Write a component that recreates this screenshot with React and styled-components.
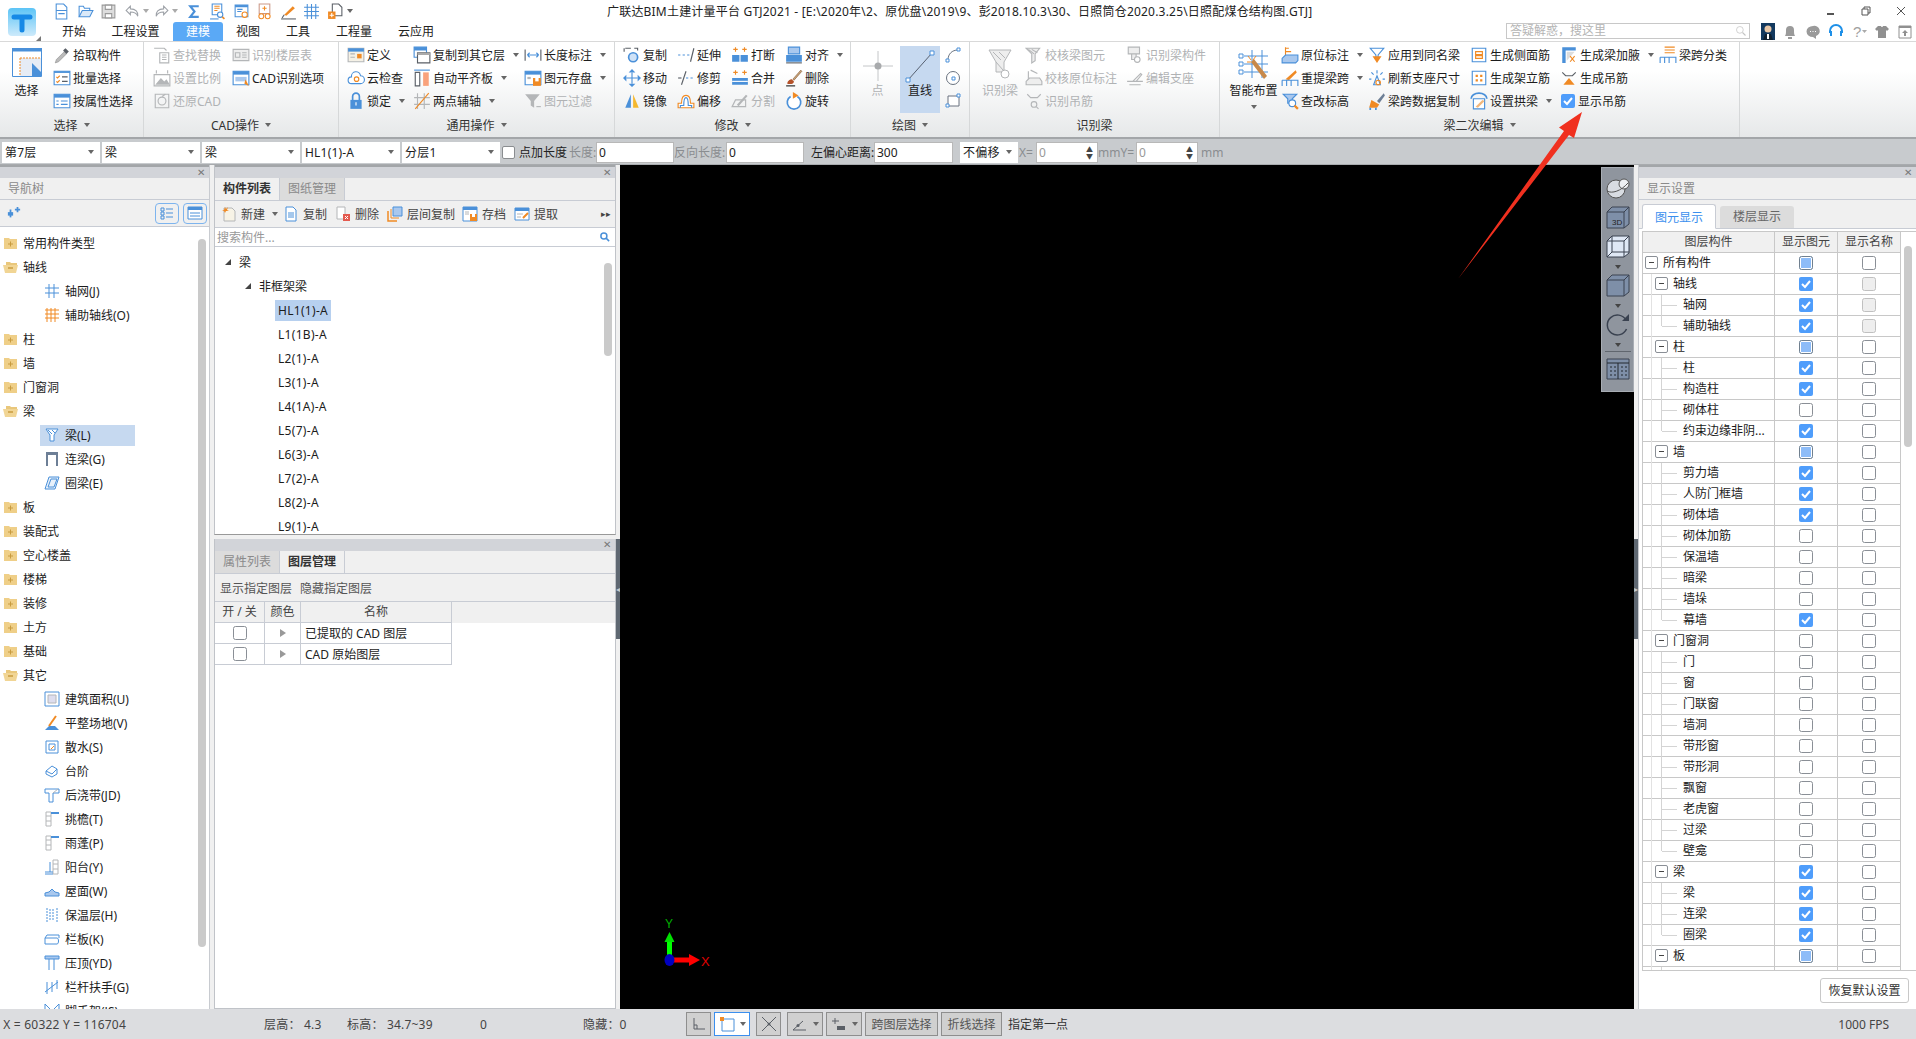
import React from 'react';
import styled, { createGlobalStyle } from 'styled-components';

const GlobalStyle = createGlobalStyle`
  html, body { margin: 0; padding: 0; background: #f0f0f0; }
  body { font-family: "Noto Sans", "Noto Sans CJK SC", sans-serif; font-size: 12px; color: #1c1c1c; }
  * { box-sizing: border-box; }
`;

const B = '#4a90d9', O = '#f08a24', G = '#b4b6b8', D = '#5a5f66', L = '#a9c8ee';

const icons = {
  // quick access
  newDoc: <><path d="M3 1h7l3 3v11H3z" fill="#fff" stroke={B} /><path d="M3 7h10M5 10h6" stroke={B} /></>,
  open: <><path d="M2 13V3h4l1 2h5v2" fill="none" stroke={B} /><path d="M2 13l3-6h10l-3 6z" fill="#dbe9f8" stroke={B} /></>,
  floppy: <><path d="M2 2h12v12H2z" fill="#ddd" stroke="#9a9a9a" /><path d="M5 2h6v4H5zM5 10h6v4H5z" fill="#fff" stroke="#9a9a9a" /></>,
  undo: <path d="M6 3L2 7l4 4V8.500c4 0 6 1 7 4 .5-4-2-7-7-7z" fill="#fff" stroke="#9ea2a8" />,
  redo: <path d="M10 3l4 4-4 4V8.500c-4 0-6 1-7 4-.5-4 2-7 7-7z" fill="#fff" stroke="#9ea2a8" />,
  sigma: <path d="M12 3H4l4 5-4 5h8" fill="none" stroke={B} strokeWidth="2" />,
  report: <><path d="M3 1h9v10H3z" fill="#fff" stroke={B} /><path d="M5 3h5M5 5h5M5 7h3" stroke={O} /><path d="M1 15h8" stroke={B} /><circle cx="10.500" cy="11" r="2.500" fill="#fff" stroke={B} /><path d="M12.500 13l2 2" stroke={O} strokeWidth="1.500" /></>,
  reportB: <><path d="M2 2h12v11H2z" fill="#fff" stroke={B} /><path d="M2 2h12v2H2z" fill={B} /><path d="M4 6h5M4 8h4" stroke={B} /><circle cx="11" cy="11" r="2.500" fill="#fff" stroke={O} /></>,
  glasses: <><path d="M3 1h10v9H3z" fill="#fff" stroke="#c98" /><path d="M6 5h4M8 3v4" stroke={O} /><circle cx="5" cy="12.500" r="2.300" fill="#fff" stroke={O} /><circle cx="11" cy="12.500" r="2.300" fill="#fff" stroke={O} /></>,
  pen: <><path d="M4 11l8-8 2 2-8 7z" fill={O} /><path d="M1 15h14" stroke={D} /><path d="M2 14l2-3" stroke={D} /></>,
  mesh: <path d="M1 4h14M1 8h14M1 12h14M4 1v14M8 1v14M12 1v14" fill="none" stroke={B} />,
  addDoc: <><path d="M5 1h6l3 3v8H5z" fill="#fff" stroke={D} /><path d="M1 8h7v7H1z" fill={O} /><path d="M4.500 9.500v4M2.500 11.500h4" stroke="#fff" /></>,
  // select group
  pick: <><path d="M2 15l1-3 7-7 2 2-7 7z" fill="#bbb" stroke="#888" strokeWidth=".5" /><path d="M10 3l3 3" stroke={D} strokeWidth="3" /></>,
  batch: <><path d="M1 2h14v12H1z" fill="#fff" stroke={B} /><path d="M1 2h14v1.500H1z" fill={B} /><path d="M3 7l1 1 2-2M3 11l1 1 2-2" fill="none" stroke={O} /><path d="M8 7h5M8 11h5" stroke={D} /></>,
  attr: <><path d="M1 2h14v12H1z" fill="#fff" stroke={B} /><path d="M1 2h14v3H1z" fill={B} /><path d="M3 8h2M3 11h2M7 8h6M7 11h6" stroke={B} /></>,
  // CAD
  findOff: <><path d="M6 6h8v9H6z" fill="none" stroke={G} /><path d="M8 8h4M8 10h4M8 12h4" stroke={G} /><path d="M1 2h9l2 2" fill="none" stroke={G} /></>,
  tableOff: <><path d="M1 3h14v10H1z" fill="#eee" stroke={G} /><path d="M3 6h4v4H3zM9 6h4M9 8h4M9 10h4" fill="none" stroke={G} /></>,
  scaleOff: <><path d="M1 5h14v10H1z" fill="#fff" stroke={G} /><path d="M2 14l5-6 3 3 2-2 3 5z" fill={G} /><path d="M3 1v3M13 1v3" stroke={G} /></>,
  restoreOff: <><path d="M2 2h12v12H2z" fill="none" stroke={G} /><circle cx="8" cy="8" r="3.500" fill="none" stroke={G} /><path d="M8 4l3-2" stroke={G} /></>,
  cadOpt: <><path d="M1 2h14v12H1z" fill="#fff" stroke={B} /><path d="M1 2h14v3H1z" fill={B} /><path d="M3 7h10v4H3z" fill={L} /><path d="M12 9l3 6-4-2z" fill={O} /></>,
  // common
  define: <><path d="M1 2h14v12H1z" fill="#f5f1e6" stroke={G} /><path d="M1 2h14v3H1z" fill={B} /><path d="M3 7h4M3 10h4" stroke={G} /><path d="M9 7h4v4H9z" fill={O} /></>,
  cloud: <><path d="M4 13a3 3 0 010-6 4 4 0 018-1 3.500 3.500 0 010 7z" fill="#fff" stroke={B} /><circle cx="8.500" cy="9" r="2" fill="none" stroke={O} /></>,
  lock: <><path d="M5 7V4a3 3 0 016 0v3" fill="none" stroke={B} strokeWidth="1.500" /><path d="M3 7h10v8H3z" fill={B} /><path d="M8 9v3" stroke="#fff" /></>,
  copyFloor: <><path d="M1 1h11v9H1z" fill="#fff" stroke={B} /><path d="M1 1h11v3H1z" fill={B} /><path d="M4 6h11v9H4z" fill="#fff" stroke={D} /><path d="M4 6h11v2H4z" fill="#aaa" /></>,
  level: <><path d="M1 1h14" stroke={B} /><path d="M2 3h4v12H2z" fill="#fff" stroke={D} /><path d="M9 3h5v12H9z" fill="#f9a27c" /></>,
  twoPt: <><path d="M4 1v14M1 5h14M10 1v14M1 11h14" stroke={G} /><path d="M2 15L14 1" stroke={O} /></>,
  dim: <><path d="M1 3v10M15 3v10" stroke={D} /><path d="M3 8h10M3 8l2-2M3 8l2 2M13 8l-2-2M13 8l-2 2" fill="none" stroke={B} /></>,
  saveEl: <><path d="M1 2h14v12H1z" fill="#fff" stroke={B} /><path d="M1 2h14v3H1z" fill={B} /><path d="M3 7h3v2H3z" fill={G} /><path d="M8 8h7v7H8z" fill={O} /><path d="M10 8h3v3h-3z" fill="#fff" /></>,
  filterOff: <><path d="M1 2h13L9 8v6l-3-2V8z" fill={G} /><path d="M11 13h4" stroke={G} /></>,
  // edit
  copy: <><path d="M2 2h5M1 2v3M10 2h3v2" fill="none" stroke={D} /><circle cx="9" cy="10" r="4" fill="#cfe2f7" stroke={B} strokeWidth="1.500" /></>,
  move: <><path d="M8 3v10M3 8h10" stroke={B} /><path d="M8 0l3 3H5zM8 16l3-3H5zM0 8l3-3v6zM16 8l-3-3v6z" fill={B} /></>,
  mirror: <><path d="M7 2v12H2z" fill={B} /><path d="M9 2v12h5z" fill="#f5b82e" /></>,
  extend: <><path d="M1 8h2M5 8h2M9 8h2" stroke={B} /><path d="M15 2l-3 12" fill="none" stroke={D} /></>,
  trim: <><path d="M4 14L8 2" stroke={D} /><path d="M1 8h3" stroke={D} /><path d="M8 8h2M12 8h2" stroke={B} /></>,
  offset: <><path d="M1 14v-4h3c0-5 2-7 4-7s4 2 4 7h3v4z" fill="#fff" stroke={O} /><path d="M3 14v-2h3c0-5 1-7 2-7s2 2 2 7h3v2" fill="none" stroke={B} /></>,
  breakEl: <><path d="M2 3h4M4 1v4M10 3h4M12 1v4" stroke={O} /><path d="M1 8h6.500v6H1zM8.500 8H15v6H8.500z" fill={B} /></>,
  merge: <><path d="M2 3h4M4 1v4M10 3h4M12 1v4" stroke={O} /><path d="M1 8h14v6H1z" fill={B} /><path d="M1 11h14" stroke="#fff" /></>,
  splitOff: <><path d="M1 13l3-6h9v6z" fill="none" stroke={G} /><path d="M6 12l8-9" stroke={G} strokeWidth="2" /></>,
  alignEl: <><path d="M3 1h10v6H3z" fill={L} stroke={B} /><path d="M1 8h14v6H1z" fill={B} /><path d="M1 15h14" stroke={D} /></>,
  erase: <><path d="M2 13c0-2 2-4 4-4l2 2c0 2-3 3-6 2z" fill="#b5522a" /><path d="M7 9l7-8 1 1-7 8z" fill="#c9a57a" stroke="#7a4a20" strokeWidth=".5" /><path d="M1 15h8" stroke="#222" /></>,
  rotate: <><path d="M5 4a6 6 0 106 0" fill="#fff" stroke={B} strokeWidth="1.500" /><path d="M7 0v6l5-3z" fill={O} /></>,
  // draw
  arc: <><path d="M3 13C3 7 7 3 13 3" fill="none" stroke="#6a7380" /><path d="M1 12h3v3H1zM12 1h3v3h-3z" fill="#fff" stroke={B} /></>,
  circle: <><circle cx="8" cy="8" r="6.500" fill="#fff" stroke="#6a7380" /><path d="M7 7h3v3H7z" fill="#fff" stroke={B} /></>,
  rectDraw: <><path d="M3 3h11v10H3z" fill="#fff" stroke="#6a7380" /><path d="M1 11h3v3H1zM12 1h3v3h-3z" fill="#fff" stroke={B} /></>,
  // identify
  checkOff: <><path d="M1 2h12L9 7v6l-3 2V7z" fill="#eee" stroke={G} /><path d="M3 3l5 4M6 3l5 3" stroke={G} /></>,
  noteOff: <><path d="M3 2v9" stroke={G} /><path d="M1 11l3-3h9l2 3v3H1z" fill="#eee" stroke={G} /><path d="M5 1l6 3" stroke={G} /></>,
  hangOff: <><path d="M2 2l3 3h6l3-3" fill="none" stroke={G} /><circle cx="8" cy="11" r="2.500" fill="none" stroke={G} /><path d="M10 13l2 2" stroke={G} /></>,
  idOff: <><path d="M2 1h10v6H2zM5 7h4v5H5z" fill="#eee" stroke={G} /><circle cx="10" cy="12" r="2.500" fill="#fff" stroke={G} /></>,
  supOff: <><path d="M1 11h14M3 14h10M6 11l7-7 1 1-5 6" fill="none" stroke={G} /></>,
  // beam
  origin: <><path d="M4 1v8M4 2h3M4 5h5" stroke={O} /><path d="M1 11l3-3h11v5l-2 2H1z" fill={L} stroke={B} /></>,
  reget: <><path d="M4 9l9-8 1 2-7 7z" fill={O} /><path d="M1 10h14v5M1 10v5M5 10v5M9 10v5" fill="none" stroke={B} /></>,
  apply: <><path d="M2 2h12L9 8v2H7V8z" fill="#fff" stroke={B} /><path d="M4 9h8l-4 6z" fill={O} /></>,
  refresh: <><path d="M8 1v3M3 3l2 2M13 3l-2 2M1 9h2M13 9h2" stroke={B} /><path d="M5 14l3-8 3 8z" fill="#fff" stroke={B} /><circle cx="9" cy="12" r="2" fill="none" stroke={O} /></>,
  copyData: <><path d="M8 8l6-7 1 2-5 7z" fill="#6d7f96" /><path d="M3 7l7 4-2 3H1z" fill={O} /><path d="M2 14v2M7 14v2" stroke={B} strokeWidth="1.500" /></>,
  sideBar: <><path d="M2 2h12v12H2z" fill="#fff" stroke={B} /><path d="M5 5h6v2.500H5zM5 8.500h6V11H5z" fill="none" stroke={O} /></>,
  stand: <><path d="M2 2h12v12H2z" fill="#fff" stroke={B} /><path d="M5 5h2v2H5zM9 5h2v2H9zM5 9h2v2H5zM9 9h2v2H9z" fill={O} /></>,
  arch: <><path d="M1 6a7 5 0 0114 0" fill="none" stroke={B} strokeWidth="1.500" /><path d="M3 6h10v9H3z" fill="#fff" stroke={B} /><path d="M5 13l6-6 2 1-6 6z" fill="#f3b77b" /></>,
  haunch: <><path d="M2 1h12v3H2zM2 4h3v11H2z" fill={B} /><path d="M6 5h7l-7 8z" fill="#ddd" /><path d="M9 9l4 5M13 9l-4 5" stroke={O} /></>,
  genHang: <><path d="M2 3l3 3h6l3-3" fill="none" stroke={D} /><path d="M8 8l5 6H3z" fill={O} /></>,
  classify: <><path d="M5 1h9M5 3.500h9M5 6h9" stroke={O} /><path d="M1 10h14v5M1 10v5M5 10v5M9 10v5" fill="none" stroke={B} /></>,
  modify: <><path d="M2 2h12l-4 4v4H6V6z" fill={L} stroke={B} /><circle cx="10" cy="10" r="3" fill="#fff" stroke={B} /><path d="M12 12l3 3" stroke={O} strokeWidth="2" /></>,
  checked: <><rect x="1" y="1" width="14" height="14" rx="2" fill="#4f9dfb" /><path d="M4 8l3 3 5-6" fill="none" stroke="#fff" strokeWidth="2" /></>,
  // nav tree
  axisNet: <path d="M1 5h14M1 10h14M5 1v14M10 1v14" fill="none" stroke={B} />,
  axisAux: <path d="M1 3h14M1 7h14M1 11h14M3 1v14M7 1v14M11 1v14" fill="none" stroke={O} />,
  beam: <><path d="M2 2h12L10 8v6H6V8z" fill="#fff" stroke={B} /><path d="M4 3l4 4M8 3l3 3" stroke={B} /></>,
  link: <><path d="M2 1h12v3H2z" fill="#6d7f96" /><path d="M3 4v11M13 4v11" stroke="#6d7f96" strokeWidth="2" /></>,
  ring: <path d="M5 2h10l-4 12H1zM7 4h6l-3 8H4z" fill="#e8f1fb" stroke={B} />,
  area: <><path d="M1 1h14v14H1z" fill="#fff" stroke={B} /><path d="M4 4h8v8H4z" fill="#dde" stroke={G} /></>,
  land: <><path d="M1 15l4-4h6l4 4z" fill={B} /><path d="M5 11l7-10" stroke={O} strokeWidth="2" /></>,
  apron: <><path d="M2 2h12v12H2z" fill="#fff" stroke={B} /><path d="M5 5h6v6H5z" fill="none" stroke={B} /><path d="M7 10l3-3" stroke={O} /></>,
  step: <><path d="M2 8l6-5 5 3v5l-5 3-6-3z" fill="#fff" stroke={B} /><path d="M2 8l6 3 5-5" fill="none" stroke={B} /></>,
  post: <><path d="M1 2h14v4H9v9H5V6H1z" fill="#fff" stroke={B} /><path d="M9 6l5-4" stroke={G} /></>,
  eave: <><path d="M2 1h5v14H2zM2 5h5M2 10h5" fill="none" stroke={G} /><path d="M7 2h8" stroke={B} strokeWidth="2" /></>,
  balcony: <><path d="M9 1h5v14H9zM9 5h5M9 10h5" fill="none" stroke={G} /><path d="M1 13h8M1 15h8M6 3v10" stroke={B} /></>,
  roof: <path d="M1 13v-3l4-1 3-3 3 3 4 1v3z" fill={L} stroke={B} />,
  insul: <path d="M3 1v14M13 1v14M6 2v12M9 2v12" fill="none" stroke={B} strokeDasharray="2 1" />,
  parapet: <path d="M1 7h12c2 0 2 6 0 6H1zM1 7l2-3h12v3" fill="#fff" stroke={B} />,
  coping: <><path d="M1 1h14v3H1z" fill={L} stroke={B} /><path d="M5 4v11M10 4v11" stroke={B} /></>,
  rail: <><path d="M1 13l13-10" stroke={B} /><path d="M3 3v12M8 3v10M13 1v9" stroke={B} /></>,
  scaffold: <path d="M1 1v14M15 1v14M1 1l14 14M15 1L1 15" stroke={B} fill="none" />,
  // panel toolbar
  docNew: <><path d="M3 2h8l3 3v10H3z" fill="#f7f3e6" stroke={G} /><path d="M4 1l1 2 2-2-1 3 2 1-3 0-1 2-1-2-2 0 2-1z" fill={O} /></>,
  docCopy: <><path d="M3 1h7l3 3v11H3z" fill="#fff" stroke={B} /><path d="M5 7h6M5 9h6M5 11h6" stroke={B} /></>,
  docDel: <><path d="M2 1h8v12H2z" fill="#fff" stroke={G} /><path d="M8 8h7v7H8z" fill="#e45a4f" /><path d="M10 10l3 3M13 10l-3 3" stroke="#fff" /></>,
  layers: <><path d="M1 5v10h9" fill="none" stroke={O} strokeWidth="1.500" /><path d="M4 3v9h8" fill="none" stroke={O} /><path d="M6 1h9v9H6z" fill={L} stroke={B} /></>,
  archive: <><path d="M1 1h14v14H1z" fill="#fff" stroke={B} /><path d="M1 1h14v3H1z" fill={B} /><path d="M3 6h4M3 8h4" stroke={G} /><path d="M8 8h7v7H8z" fill={O} /><path d="M10 8h3v3h-3z" fill="#fff" /></>,
  fetch: <><path d="M1 2h14v12H1z" fill="#fff" stroke={B} /><path d="M1 2h14v3H1z" fill={B} /><path d="M3 8h6M3 11h4" stroke={G} /><path d="M9 12l5-5" stroke={O} strokeWidth="2" /></>,
  search: <><circle cx="6.500" cy="6.500" r="4" fill="none" stroke={B} strokeWidth="2" /><path d="M9.500 9.500l4 4" stroke={B} strokeWidth="2" /></>,
  searchOff: <><circle cx="6.500" cy="6.500" r="4.500" fill="none" stroke="#c4c4c4" /><path d="M10 10l4 4" stroke="#c4c4c4" strokeWidth="1.500" /></>,
  star: <><path d="M1 7h6v4H1z" fill={B} /><path d="M4 4v9" stroke={B} strokeWidth="2" /><path d="M9 4h6M12 1v6" stroke={B} strokeWidth="2" /></>,
  listBtn: <><path d="M2 3h3v3H2zM2 7h3v3H2zM2 11h3v3H2z" fill="none" stroke={B} /><path d="M7 4h7M7 8h7M7 12h7" stroke={B} /></>,
  panelBtn: <><path d="M1 2h14v12H1z" fill="#fff" stroke={B} /><path d="M1 2h14v3H1z" fill={B} /><path d="M3 8h10M3 11h10" stroke={B} /></>,
  // status
  ortho: <path d="M3 2v11h11M3 9h3v4" fill="none" stroke={D} />,
  snap: <><path d="M3 3h12v12H3z" fill="#fff" stroke={B} /><path d="M1 1h4v4H1z" fill={O} /></>,
  cross: <><path d="M1 1l14 14M15 1L1 15" stroke={D} /><circle cx="8" cy="8" r="1.500" fill={D} /></>,
  angle: <><path d="M1 14h13M1 14l10-9" stroke={D} /><circle cx="6" cy="9.500" r="1.500" fill={D} /></>,
  dynamic: <><path d="M1 5h7M4 2v6" stroke={D} /><path d="M6 10h8v4H6z" fill={D} /></>,
};

const Svg = styled.svg`
  flex: none;
  display: block;
`;

const Glyph = ({ name, size = 16 }) => (
  <Svg width={size} height={size} viewBox="0 0 16 16">{icons[name]}</Svg>
);

const Page = styled.div`
  position: relative;
  width: 1916px;
  height: 1039px;
  overflow: hidden;
  display: flex;
  flex-direction: column;
  background: #f0f0f0;
`;

/* title area */
const Top = styled.div`
  height: 41px;
  display: flex;
  background: #fff;
  flex: none;
`;
const LogoCell = styled.div`
  position: relative;
  width: 50px;
  flex: none;
  padding: 8px 0 0 8px;
  &::after {
    content: "";
    position: absolute;
    left: 36px;
    top: 36px;
    border-style: solid;
    border-width: 0 0 5px 5px;
    border-color: transparent transparent #777 transparent;
  }
`;
const TopCol = styled.div`
  flex: 1;
  display: flex;
  flex-direction: column;
`;
const QatRow = styled.div`
  height: 22px;
  display: flex;
  align-items: center;
`;
const Qat = styled.div`
  width: 557px;
  flex: none;
  display: flex;
  align-items: center;
  padding-left: 3px;
`;
const QatSlot = styled.span`
  width: ${p => p.$w || 23.5}px;
  flex: none;
  display: flex;
  align-items: center;
  gap: 2px;
`;
const TinyCaret = styled.i`
  width: 0;
  height: 0;
  flex: none;
  border-left: 3px solid transparent;
  border-right: 3px solid transparent;
  border-top: 4px solid ${p => p.$color || '#666'};
  margin-left: ${p => p.$gap || 0}px;
`;
const BigCaret = styled(TinyCaret)`
  margin-top: 7px;
`;
const Title = styled.div`
  white-space: nowrap;
  color: #222;
  font-size: 12px;
  letter-spacing: 0.2px;
`;
const WinBtns = styled.div`
  margin-left: auto;
  display: flex;
  align-items: center;
  padding-right: 10px;
  gap: 25px;
  color: #555;
`;
const TabRow = styled.div`
  height: 19px;
  display: flex;
  align-items: stretch;
`;
const MenuTab = styled.div`
  width: ${p => p.$w}px;
  text-align: center;
  line-height: 19px;
  border-radius: 3px 3px 0 0;
  color: ${p => (p.$active ? '#fff' : '#222')};
  background: ${p => (p.$active ? '#5aa9f6' : 'transparent')};
`;
const SearchBox = styled.div`
  margin: 1px 0 2px auto;
  width: 244px;
  height: 16px;
  border: 1px solid #c8c8c8;
  color: #b4b4b4;
  line-height: 14px;
  padding: 0 2px 0 3px;
  display: flex;
  justify-content: space-between;
  align-items: center;
`;
const TopIcons = styled.div`
  display: flex;
  align-items: center;
  width: 166px;
  flex: none;
  padding-left: 11px;
  gap: 7px;
`;

/* ribbon */
const Ribbon = styled.div`
  height: 98px;
  flex: none;
  display: flex;
  border-top: 1px solid #d9d9d9;
  border-bottom: 2px solid #a3a6a9;
  background: linear-gradient(#fff 30%, #e6e8e9);
`;
const RGroup = styled.div`
  width: ${p => p.$w}px;
  flex: none;
  display: flex;
  flex-direction: column;
  border-right: 1px solid #d6d8d9;
  position: relative;
`;
const RBody = styled.div`
  height: 71px;
  padding: 1px 0 0 ${p => p.$pad || 0}px;
  display: flex;
`;
const RLabel = styled.div`
  height: 20px;
  padding-top: 4px;
  display: flex;
  align-items: center;
  justify-content: center;
  gap: 6px;
  color: #333;
`;
const RCol = styled.div`
  width: ${p => p.$w}px;
  flex: none;
  display: flex;
  flex-direction: column;
`;
const RItem = styled.div`
  height: 23px;
  display: flex;
  align-items: center;
  gap: 2px;
  white-space: nowrap;
  color: ${p => (p.$off ? '#b0b2b4' : '#1c1c1c')};
`;
const BigBtn = styled.div`
  width: ${p => p.$w}px;
  height: 67px;
  margin-top: 3px;
  flex: none;
  display: flex;
  flex-direction: column;
  align-items: center;
  padding-top: 2px;
  line-height: 14px;
  color: ${p => (p.$off ? '#b0b2b4' : '#1c1c1c')};
  background: ${p => (p.$active ? '#c6d9f0' : 'transparent')};
`;

const ribbonItem = (it, i) => (
  <RItem key={i} $off={it.off}>
    {it.icon && <Glyph name={it.icon} size={it.sz || 18} />}
    {it.t}
    {it.caret && <TinyCaret $gap={6} />}
  </RItem>
);
const ItemCol = ({ w, items }) => <RCol $w={w}>{items.map(ribbonItem)}</RCol>;

/* options bar */
const OptBar = styled.div`
  height: 26px;
  flex: none;
  display: flex;
  align-items: center;
  padding: 1px 0 0 2px;
  background: #c8cbce;
  border-bottom: 1px solid #a8abae;
`;
const Sel = styled.div`
  width: ${p => p.$w || 98}px;
  height: 21px;
  flex: none;
  margin-right: ${p => p.$mr ?? 2}px;
  background: #fff;
  display: flex;
  align-items: center;
  justify-content: space-between;
  padding: 0 6px 0 3px;
  letter-spacing: 0.2px;
`;
const OptCheck = styled.span`
  width: 13px;
  height: 13px;
  flex: none;
  background: #fff;
  border: 1px solid #8a8d90;
  border-radius: 2px;
  margin: 0 4px 0 0;
`;
const OptText = styled.span`
  flex: none;
  width: ${p => p.$w}px;
  white-space: nowrap;
  color: ${p => (p.$dim ? '#8a8d90' : '#222')};
`;
const OptInput = styled.div`
  width: ${p => p.$w || 78}px;
  height: 21px;
  flex: none;
  background: #fff;
  line-height: 20px;
  padding-left: 2px;
  color: ${p => (p.$dim ? '#999' : '#222')};
  border: 1px solid #b8b8b8;
  position: relative;
`;
const Spin = styled.span`
  position: absolute;
  right: 4px;
  top: 3px;
  font-size: 7px;
  line-height: 7px;
  color: #444;
  text-align: center;
`;

/* body */
const Body = styled.div`
  flex: 1;
  min-height: 0;
  display: flex;
`;
const Panel = styled.div`
  width: ${p => p.$w}px;
  flex: none;
  display: flex;
  flex-direction: column;
  background: #fff;
  border-right: ${p => (p.$noRight ? 'none' : '1px solid #c8cbd0')};
  border-left: ${p => (p.$left ? '1px solid #c8cbd0' : 'none')};
  overflow: hidden;
`;
const Gap = styled.div`
  width: 4px;
  flex: none;
  background: #f0f0f0;
  padding-top: 374px;
`;
const GripHandle = styled.div`
  height: 100px;
  background: #5f6872;
  color: #c8ccd0;
  font-size: 8px;
  line-height: 100px;
  overflow: hidden;
`;
const CloseBar = styled.div`
  height: 13px;
  flex: none;
  background: #d2d4d9;
  border-top: 2px solid #a3a6a9;
  color: #777;
  font-size: 10px;
  line-height: 11px;
  text-align: right;
  padding-right: 4px;
`;
const PanelTitle = styled.div`
  height: 22px;
  flex: none;
  background: #f0f0f0;
  border-bottom: 1px solid #c8ccd4;
  color: #8a8a8a;
  line-height: 21px;
  padding-left: 8px;
`;
const NavTools = styled.div`
  height: 27px;
  flex: none;
  display: flex;
  align-items: center;
  padding: 0 2px 0 7px;
  gap: 4px;
  background: #f0f0f0;
  border-bottom: 1px solid #c8ccd4;
`;
const NavToolBtn = styled.span`
  width: 24px;
  height: 21px;
  border: 1px solid #7db4ee;
  border-radius: 4px;
  display: flex;
  align-items: center;
  justify-content: center;
  margin-left: ${p => (p.$push ? 'auto' : 0)};
`;
const NavTree = styled.div`
  position: relative;
  flex: 1;
  min-height: 0;
  overflow: hidden;
  padding-top: 4px;
`;
const NavRow = styled.div`
  height: 24px;
  display: flex;
  align-items: center;
  white-space: nowrap;
  color: #1c1c1c;
`;
const NavHead = styled(NavRow)`
  padding-left: 3px;
  gap: 4px;
`;
const NavLeaf = styled(NavRow)`
  margin-left: 40px;
  width: 95px;
  padding-left: 4px;
  gap: 5px;
  height: 24px;
  background: ${p => (p.$active ? 'linear-gradient(transparent 1.5px, #c6d9f0 1.5px, #c6d9f0 22.5px, transparent 22.5px)' : 'transparent')};
`;
const ScrollThumb = styled.div`
  position: absolute;
  left: ${p => p.$x}px;
  top: ${p => p.$y}px;
  width: 8px;
  height: ${p => p.$h}px;
  background: #cacaca;
  border-radius: 4px;
`;

const Folder = ({ open }) => (
  <Svg width="16" height="14" viewBox="0 0 16 14">
    {open ? (
      <><path d="M3 2h4l1 1h6v3H3z" fill="#e9c77b" /><path d="M0 5h15l-2 8H2z" fill="#f1d594" /><path d="M5 8h5" stroke="#c89b3f" strokeWidth="1.500" /></>
    ) : (
      <><path d="M1 2h5l1 1h7v10H1z" fill="#efcf88" /><path d="M5 8h5M7.500 5.500v5" stroke="#c89b3f" /></>
    )}
  </Svg>
);

const navItems = [
  { t: '常用构件类型' }, { t: '轴线', open: 1 },
  { t: '轴网(J)', i: 'axisNet' }, { t: '辅助轴线(O)', i: 'axisAux' },
  { t: '柱' }, { t: '墙' }, { t: '门窗洞' }, { t: '梁', open: 1 },
  { t: '梁(L)', i: 'beam', active: 1 }, { t: '连梁(G)', i: 'link' }, { t: '圈梁(E)', i: 'ring' },
  { t: '板' }, { t: '装配式' }, { t: '空心楼盖' }, { t: '楼梯' }, { t: '装修' }, { t: '土方' }, { t: '基础' },
  { t: '其它', open: 1 },
  { t: '建筑面积(U)', i: 'area' }, { t: '平整场地(V)', i: 'land' }, { t: '散水(S)', i: 'apron' }, { t: '台阶', i: 'step' },
  { t: '后浇带(JD)', i: 'post' }, { t: '挑檐(T)', i: 'eave' }, { t: '雨蓬(P)', i: 'eave' }, { t: '阳台(Y)', i: 'balcony' },
  { t: '屋面(W)', i: 'roof' }, { t: '保温层(H)', i: 'insul' }, { t: '栏板(K)', i: 'parapet' }, { t: '压顶(YD)', i: 'coping' },
  { t: '栏杆扶手(G)', i: 'rail' }, { t: '脚手架(JS)', i: 'scaffold' },
];

/* middle */
const MiddleCol = styled.div`
  width: 402px;
  flex: none;
  display: flex;
  flex-direction: column;
  gap: 4px;
`;
const MidBox = styled.div`
  flex: ${p => (p.$grow ? 1 : 'none')};
  height: ${p => (p.$grow ? 'auto' : '370px')};
  min-height: 0;
  display: flex;
  flex-direction: column;
  background: #fff;
  border-right: 1px solid #c0c3c8;
  border-left: 1px solid #c0c3c8;
  border-bottom: 1px solid ${p => (p.$grow ? '#c0c3c8' : '#999')};
`;
const SecondBar = styled(CloseBar)`
  border-top: none;
  height: 12px;
`;
const TabStrip = styled.div`
  height: 23px;
  flex: none;
  display: flex;
  background: #f0f0f0;
  border-bottom: 1px solid #c8ccd4;
`;
const PanelTab = styled.div`
  width: 65px;
  text-align: center;
  line-height: 21px;
  font-weight: ${p => (p.$active ? 600 : 400)};
  color: ${p => (p.$active ? '#333' : '#8a8a8a')};
  background: ${p => (p.$active ? '#f0f0f0' : '#dcdcdc')};
  border-right: 1px solid #c8ccd4;
`;
const MidTools = styled.div`
  height: 27px;
  flex: none;
  display: flex;
  align-items: center;
  background: #f0f0f0;
  border-bottom: 1px solid #c8ccd4;
  padding-left: 6px;
  position: relative;
`;
const MidTool = styled.span`
  width: ${p => p.$w}px;
  flex: none;
  display: flex;
  align-items: center;
  gap: 4px;
  white-space: nowrap;
  color: #444;
`;
const MoreMark = styled.span`
  position: absolute;
  right: 4px;
  top: 6px;
  font-size: 9px;
  color: #444;
`;
const SearchRow = styled.div`
  height: 19px;
  flex: none;
  display: flex;
  align-items: center;
  justify-content: space-between;
  padding: 0 4px 0 2px;
  border-bottom: 1px solid #c8ccd4;
  color: #999;
`;
const ListTree = styled.div`
  position: relative;
  flex: 1;
  min-height: 0;
  overflow: hidden;
  padding-top: 3px;
`;
const ListRow = styled.div`
  height: 24px;
  display: flex;
  align-items: center;
  padding-left: ${p => p.$x}px;
  gap: 8px;
  color: #1c1c1c;
`;
const ListLabel = styled.span`
  padding: 0 3px;
  line-height: 21px;
  letter-spacing: 0.3px;
  background: ${p => (p.$active ? '#b7d0ef' : 'transparent')};
`;
const TreeTri = styled.i`
  width: 0;
  height: 0;
  border-style: solid;
  border-width: 0 0 6px 6px;
  border-color: transparent transparent #444 transparent;
`;
const LayerTools = styled.div`
  height: 27px;
  flex: none;
  background: #f0f0f0;
  display: flex;
  align-items: center;
  padding-left: 5px;
  gap: 8px;
  color: #555;
`;
const LayerGrid = styled.div`
  display: grid;
  grid-template-columns: 50px 36px 151px 1fr;
  grid-template-rows: 22px;
  grid-auto-rows: 21px;
`;
const LayerHead = styled.div`
  background: #f0f0f0;
  border-top: 1px solid #c8ccd4;
  border-bottom: ${p => (p.$fill ? 'none' : '1px solid #c8ccd4')};
  border-right: ${p => (p.$fill ? 'none' : '1px solid #c8ccd4')};
  text-align: center;
  line-height: 20px;
  color: #444;
`;
const LayerCell = styled.div`
  border-right: 1px solid #c8ccd4;
  border-bottom: 1px solid #c8ccd4;
  display: flex;
  align-items: center;
  justify-content: ${p => (p.$text ? 'flex-start' : 'center')};
  padding-left: ${p => (p.$text ? 4 : 0)}px;
  color: #222;
`;
const PlayTri = styled.i`
  width: 0;
  height: 0;
  border-style: solid;
  border-width: 4px 0 4px 6px;
  border-color: transparent transparent transparent #999;
`;

/* canvas */
const Canvas = styled.div`
  position: relative;
  width: 1014px;
  flex: none;
  background: #000;
`;
const ViewBar = styled.div`
  position: absolute;
  right: 0;
  top: 2px;
  width: 33px;
  height: 225px;
  background: #8f959e;
  border: 1px solid #a8adb4;
  display: flex;
  flex-direction: column;
  align-items: center;
  padding-top: 8px;
`;
const ViewBtn = styled.div`
  height: ${p => p.$h || 28}px;
  flex: none;
`;
const ViewCaret = styled.div`
  height: ${p => p.$h || 11}px;
  flex: none;
  display: flex;
  align-items: flex-start;
  padding-top: 2px;
`;
const ViewSep = styled.div`
  width: 26px;
  height: 1px;
  background: #60666e;
  margin: 2px 0 6px;
`;
const AxisMark = styled.svg`
  position: absolute;
  left: 40px;
  bottom: 34px;
`;

/* right */
const RightTabs = styled.div`
  height: 29px;
  flex: none;
  display: flex;
  align-items: flex-end;
  gap: 4px;
  padding-left: 3px;
  background: #f0f0f0;
  border-bottom: 1px solid #c8ccd4;
`;
const RightTab = styled.div`
  width: 74px;
  height: ${p => (p.$active ? 25 : 22)}px;
  margin-bottom: ${p => (p.$active ? -1 : 0)}px;
  text-align: center;
  line-height: ${p => (p.$active ? 25 : 22)}px;
  border-radius: 3px 3px 0 0;
  color: ${p => (p.$active ? '#3b8fee' : '#666')};
  background: ${p => (p.$active ? '#fff' : '#dcdcdc')};
  border: ${p => (p.$active ? '1px solid #c8ccd4' : 'none')};
  border-bottom: ${p => (p.$active ? '1px solid #fff' : 'none')};
`;
const GridWrap = styled.div`
  position: relative;
  flex: none;
  height: 740px;
  margin: 2px 0 0 3px;
  border: 1px solid #c8c8c8;
  border-right: none;
  overflow: hidden;
`;
const GridRow = styled.div`
  display: grid;
  grid-template-columns: 132px 63px 63px;
  height: 21px;
  width: 258px;
`;
const GridHead = styled.div`
  background: #f0f0f0;
  border-right: 1px solid #c8c8c8;
  border-bottom: 1px solid #c8c8c8;
  text-align: center;
  line-height: 20px;
  color: #444;
`;
const TreeCell = styled.div`
  position: relative;
  border-right: 1px solid #c8c8c8;
  border-bottom: 1px solid #c8c8c8;
  padding-left: ${p => [20, 30, 40][p.$level]}px;
  line-height: 20px;
  white-space: nowrap;
  color: #1c1c1c;
  &::before {
    content: "";
    display: ${p => (p.$level === 0 ? 'none' : 'block')};
    position: absolute;
    left: 8px;
    top: 0;
    bottom: -1px;
    border-left: 1px solid #e2e2e2;
  }
`;
const Branch = styled.i`
  position: absolute;
  left: 18px;
  top: 0;
  bottom: ${p => (p.$last ? '10px' : '-1px')};
  width: 16px;
  border-left: 1px solid #d4d4d4;
  &::after {
    content: "";
    position: absolute;
    left: 0;
    right: 0;
    top: 10px;
    border-top: 1px solid #d4d4d4;
  }
`;
const Minus = styled.i`
  position: absolute;
  left: ${p => (p.$level === 0 ? 2 : 12)}px;
  top: 3px;
  width: 13px;
  height: 13px;
  background: #fff;
  border: 1px solid #8a8f96;
  border-radius: 2px;
  &::after {
    content: "";
    position: absolute;
    left: 3px;
    right: 3px;
    top: 5px;
    border-top: 1px solid #444;
  }
`;
const CheckCell = styled.div`
  border-right: 1px solid #c8c8c8;
  border-bottom: 1px solid #c8c8c8;
  display: flex;
  align-items: center;
  justify-content: center;
`;
const Box = styled.span`
  width: 14px;
  height: 14px;
  display: block;
  border-radius: 2.5px;
  border: 1px solid ${p => (p.$off ? '#c0c0c0' : '#8a8f96')};
  background: ${p => (p.$off ? '#eeeeee' : '#fff')};
`;
const PartBox = styled(Box)`
  border-color: #70808f;
  background: #8dbcf8;
  box-shadow: inset 0 0 0 1px #fff;
`;
const RightFoot = styled.div`
  flex: 1;
  display: flex;
  justify-content: flex-end;
  align-items: flex-start;
  padding: 7px 7px 0 0;
`;
const ResetBtn = styled.div`
  width: 89px;
  height: 25px;
  border: 1px solid #c8c8c8;
  border-radius: 3px;
  text-align: center;
  line-height: 23px;
  color: #333;
`;

/* status bar */
const Status = styled.div`
  height: 30px;
  flex: none;
  display: flex;
  align-items: center;
  background: #dcdde0;
  color: #444;
`;
const StatusText = styled.span`
  width: ${p => p.$w}px;
  flex: none;
  white-space: nowrap;
  letter-spacing: 0.2px;
`;
const StatusBtn = styled.div`
  width: ${p => p.$w}px;
  height: 24px;
  flex: none;
  margin-right: ${p => p.$mr}px;
  background: ${p => (p.$on ? '#fff' : '#d0d0d0')};
  border: 1px solid ${p => (p.$on ? '#3b8fee' : '#8e8e8e')};
  display: flex;
  align-items: center;
  justify-content: center;
  gap: 5px;
  color: #555;
`;
const StatusHint = styled.span`
  margin-left: 6px;
  color: #333;
`;
const Fps = styled.span`
  margin-left: auto;
  padding-right: 27px;
`;
const RedArrow = styled.svg`
  position: absolute;
  left: 0;
  top: 0;
  pointer-events: none;
`;

const layerRows = [
  { t: '所有构件', l: 0, a: 'p', b: '' },
  { t: '轴线', l: 1, a: 'c', b: 'off' }, { t: '轴网', l: 2, a: 'c', b: 'off' }, { t: '辅助轴线', l: 2, a: 'c', b: 'off', last: 1 },
  { t: '柱', l: 1, a: 'p' }, { t: '柱', l: 2, a: 'c' }, { t: '构造柱', l: 2, a: 'c' }, { t: '砌体柱', l: 2 }, { t: '约束边缘非阴...', l: 2, a: 'c', last: 1 },
  { t: '墙', l: 1, a: 'p' }, { t: '剪力墙', l: 2, a: 'c' }, { t: '人防门框墙', l: 2, a: 'c' }, { t: '砌体墙', l: 2, a: 'c' }, { t: '砌体加筋', l: 2 }, { t: '保温墙', l: 2 }, { t: '暗梁', l: 2 }, { t: '墙垛', l: 2 }, { t: '幕墙', l: 2, a: 'c', last: 1 },
  { t: '门窗洞', l: 1 }, { t: '门', l: 2 }, { t: '窗', l: 2 }, { t: '门联窗', l: 2 }, { t: '墙洞', l: 2 }, { t: '带形窗', l: 2 }, { t: '带形洞', l: 2 }, { t: '飘窗', l: 2 }, { t: '老虎窗', l: 2 }, { t: '过梁', l: 2 }, { t: '壁龛', l: 2, last: 1 },
  { t: '梁', l: 1, a: 'c' }, { t: '梁', l: 2, a: 'c' }, { t: '连梁', l: 2, a: 'c' }, { t: '圈梁', l: 2, a: 'c', last: 1 },
  { t: '板', l: 1, a: 'p' }, { t: '', l: 2, a: 'c' },
];

const CheckMark = ({ state }) => {
  if (state === 'c') return <Glyph name="checked" size={16} />;
  if (state === 'p') return <PartBox />;
  return <Box $off={state === 'off'} />;
};

const listItems = ['L1(1B)-A', 'L2(1)-A', 'L3(1)-A', 'L4(1A)-A', 'L5(7)-A', 'L6(3)-A', 'L7(2)-A', 'L8(2)-A', 'L9(1)-A'];

export default function App() {
  return (
    <Page>
      <GlobalStyle />
      <Top>
        <LogoCell>
          <Svg width="28" height="28" viewBox="0 0 28 28">
            <defs>
              <linearGradient id="logoBg" x1="0" y1="0" x2="0" y2="1">
                <stop offset="0" stopColor="#5cc4f6" />
                <stop offset="1" stopColor="#cdeafb" />
              </linearGradient>
            </defs>
            <rect width="28" height="28" rx="4" fill="url(#logoBg)" />
            <path d="M6 9h16M14 9v13" stroke="#1689e6" strokeWidth="5" strokeLinecap="round" fill="none" />
          </Svg>
        </LogoCell>
        <TopCol>
          <QatRow>
            <Qat>
              {['newDoc', 'open', 'floppy'].map(n => <QatSlot key={n}><Glyph name={n} size={17} /></QatSlot>)}
              <QatSlot $w={29}><Glyph name="undo" size={17} /><TinyCaret $color="#aaa" /></QatSlot>
              <QatSlot $w={33}><Glyph name="redo" size={17} /><TinyCaret $color="#aaa" /></QatSlot>
              {['sigma', 'report', 'reportB', 'glasses', 'pen', 'mesh', 'addDoc'].map(n => <QatSlot key={n}><Glyph name={n} size={17} /></QatSlot>)}
              <TinyCaret $gap={-3} />
            </Qat>
            <Title>广联达BIM土建计量平台 GTJ2021 - [E:\2020年\2、原优盘\2019\9、彭2018.10.3\30、日照筒仓2020.3.25\日照配煤仓结构图.GTJ]</Title>
            <WinBtns>
              <Svg width="10" height="10" viewBox="0 0 10 10"><path d="M1 8h7" stroke="#555" strokeWidth="2" /></Svg>
              <Svg width="10" height="10" viewBox="0 0 10 10"><path d="M3 3V1h6v6H7M1 3h6v6H1z" fill="none" stroke="#555" /></Svg>
              <Svg width="10" height="10" viewBox="0 0 10 10"><path d="M1 1l8 8M9 1L1 9" stroke="#555" /></Svg>
            </WinBtns>
          </QatRow>
          <TabRow>
            <MenuTab $w={48}>开始</MenuTab>
            <MenuTab $w={75}>工程设置</MenuTab>
            <MenuTab $w={50} $active>建模</MenuTab>
            <MenuTab $w={50}>视图</MenuTab>
            <MenuTab $w={50}>工具</MenuTab>
            <MenuTab $w={62}>工程量</MenuTab>
            <MenuTab $w={62}>云应用</MenuTab>
            <SearchBox>答疑解惑，搜这里<Glyph name="searchOff" size={12} /></SearchBox>
            <TopIcons>
              <Svg width="14" height="17" viewBox="0 0 14 17"><path d="M0 0h14v17H0z" fill="#13395f" /><circle cx="7" cy="6" r="3.500" fill="#e9c8a8" /><path d="M2 17l2-6h6l2 6z" fill="#102030" /><path d="M6 11h2v5H6z" fill="#fff" /></Svg>
              <Svg width="16" height="16" viewBox="0 0 16 16"><path d="M3 12c1-2 1-3 1-6a4 4 0 018 0c0 3 0 4 1 6zM6 13h4v2H6z" fill="#9a9a9a" /></Svg>
              <Svg width="16" height="16" viewBox="0 0 16 16"><path d="M8 2a6.500 5.500 0 100 11l3 2v-3a5 5 0 00-3-10z" fill="#9a9a9a" /><path d="M5 7.500h1M7.500 7.500h1M10 7.500h1" stroke="#fff" /></Svg>
              <Svg width="16" height="16" viewBox="0 0 16 16"><path d="M2 9V7a6 6 0 0112 0v2" fill="none" stroke="#1e90e8" strokeWidth="2" /><path d="M2 7h2v5H2zM12 7h2v5h-2z" fill="#1e90e8" /></Svg>
              <Svg width="16" height="16" viewBox="0 0 16 16"><text x="2" y="13" fontSize="15" fill="#a0a0a0" fontFamily="Liberation Sans">?</text><path d="M11 6h5l-2.500 3z" fill="#aaa" /></Svg>
              <Svg width="16" height="16" viewBox="0 0 16 16"><path d="M4 2l-3 3 2 2 1-1v8h8V6l1 1 2-2-3-3H9a1 1 0 01-2 0z" fill="#909090" /></Svg>
              <Svg width="16" height="16" viewBox="0 0 16 16"><path d="M2 2h12v12H2z" fill="#fff" stroke="#909090" /><path d="M2 2h12v2H2z" fill="#909090" /><path d="M8 6l3 3H9v3H7V9H5z" fill="#909090" /></Svg>
            </TopIcons>
          </TabRow>
        </TopCol>
      </Top>

      <Ribbon>
        <RGroup $w={144}>
          <RBody>
            <BigBtn $w={53}>
              <Svg width="30" height="36" viewBox="0 0 30 36"><path d="M.5.500h29v28H.500z" fill="#fff" stroke={B} /><path d="M0 0h30v3.500H0z" fill={B} /><path d="M8 10h21v18H8z" fill="#e6ecf5" /><path d="M8 10h21M8 10v18" fill="none" stroke={O} strokeDasharray="2 1" /><path d="M20 15l9 9v5h-9z" fill={B} /></Svg>
              选择
            </BigBtn>
            <ItemCol w={88} items={[{ icon: 'pick', t: '拾取构件' }, { icon: 'batch', t: '批量选择' }, { icon: 'attr', t: '按属性选择' }]} />
          </RBody>
          <RLabel>选择<TinyCaret /></RLabel>
        </RGroup>
        <RGroup $w={195}>
          <RBody $pad={9}>
            <ItemCol w={79} items={[{ icon: 'findOff', t: '查找替换', off: 1 }, { icon: 'scaleOff', t: '设置比例', off: 1 }, { icon: 'restoreOff', t: '还原CAD', off: 1 }]} />
            <ItemCol w={100} items={[{ icon: 'tableOff', t: '识别楼层表', off: 1 }, { icon: 'cadOpt', t: 'CAD识别选项' }]} />
          </RBody>
          <RLabel>CAD操作<TinyCaret /></RLabel>
        </RGroup>
        <RGroup $w={276}>
          <RBody $pad={8}>
            <ItemCol w={66} items={[{ icon: 'define', t: '定义' }, { icon: 'cloud', t: '云检查' }, { icon: 'lock', t: '锁定', caret: 1 }]} />
            <ItemCol w={111} items={[{ icon: 'copyFloor', t: '复制到其它层', caret: 1 }, { icon: 'level', t: '自动平齐板', caret: 1 }, { icon: 'twoPt', t: '两点辅轴', caret: 1 }]} />
            <ItemCol w={90} items={[{ icon: 'dim', t: '长度标注', caret: 1 }, { icon: 'saveEl', t: '图元存盘', caret: 1 }, { icon: 'filterOff', t: '图元过滤', off: 1 }]} />
          </RBody>
          <RLabel>通用操作<TinyCaret /></RLabel>
        </RGroup>
        <RGroup $w={236}>
          <RBody $pad={8}>
            <ItemCol w={54} items={[{ icon: 'copy', t: '复制' }, { icon: 'move', t: '移动' }, { icon: 'mirror', t: '镜像' }]} />
            <ItemCol w={54} items={[{ icon: 'extend', t: '延伸' }, { icon: 'trim', t: '修剪' }, { icon: 'offset', t: '偏移' }]} />
            <ItemCol w={54} items={[{ icon: 'breakEl', t: '打断' }, { icon: 'merge', t: '合并' }, { icon: 'splitOff', t: '分割', off: 1 }]} />
            <ItemCol w={60} items={[{ icon: 'alignEl', t: '对齐', caret: 1 }, { icon: 'erase', t: '删除' }, { icon: 'rotate', t: '旋转' }]} />
          </RBody>
          <RLabel>修改<TinyCaret /></RLabel>
        </RGroup>
        <RGroup $w={119}>
          <RBody $pad={4}>
            <BigBtn $w={45} $off>
              <Svg width="30" height="36" viewBox="0 0 30 36"><path d="M0 18h30M15 3v30" stroke="#c4c6c8" /><circle cx="15" cy="18" r="3.500" fill="#a8aaac" /></Svg>
              点
            </BigBtn>
            <BigBtn $w={40} $active>
              <Svg width="30" height="36" viewBox="0 0 30 36"><path d="M3 32L27 5" stroke="#566070" /><path d="M1 30h4v4H1zM25 3h4v4h-4z" fill="#fff" stroke={B} /></Svg>
              直线
            </BigBtn>
            <RCol $w={24}>
              {['arc', 'circle', 'rectDraw'].map(n => <RItem key={n}>&nbsp;<Glyph name={n} /></RItem>)}
            </RCol>
          </RBody>
          <RLabel>绘图<TinyCaret /></RLabel>
        </RGroup>
        <RGroup $w={250}>
          <RBody $pad={5}>
            <BigBtn $w={50} $off>
              <Svg width="26" height="36" viewBox="0 0 26 36"><path d="M2 2h22l-7 12v10H9V14z" fill="#eee" stroke={G} /><path d="M6 4l8 8M12 4l6 6M9 14l7 8" stroke={G} /><circle cx="18" cy="26" r="4" fill="#fff" stroke={G} /></Svg>
              识别梁
            </BigBtn>
            <ItemCol w={101} items={[{ icon: 'checkOff', t: '校核梁图元', off: 1 }, { icon: 'noteOff', t: '校核原位标注', off: 1 }, { icon: 'hangOff', t: '识别吊筋', off: 1 }]} />
            <ItemCol w={90} items={[{ icon: 'idOff', t: '识别梁构件', off: 1 }, { icon: 'supOff', t: '编辑支座', off: 1 }]} />
          </RBody>
          <RLabel>识别梁</RLabel>
        </RGroup>
        <RGroup $w={520}>
          <RBody $pad={6}>
            <BigBtn $w={55}>
              <Svg width="32" height="36" viewBox="0 0 32 36"><path d="M6 8h24M6 16h24M6 24h24M14 2v28M24 2v28" fill="none" stroke={B} /><path d="M1 6h4v4H1zM1 14h4v4H1zM1 22h4v4H1z" fill="#fff" stroke={B} /><path d="M13 14l13 17 3-3-13-17z" fill="#c8894a" /><path d="M10 8l3 4M18 8l-3 4M9 14h4" stroke={O} /></Svg>
              智能布置
              <BigCaret />
            </BigBtn>
            <ItemCol w={87} items={[{ icon: 'origin', t: '原位标注', caret: 1 }, { icon: 'reget', t: '重提梁跨', caret: 1 }, { icon: 'modify', t: '查改标高' }]} />
            <ItemCol w={102} items={[{ icon: 'apply', t: '应用到同名梁' }, { icon: 'refresh', t: '刷新支座尺寸' }, { icon: 'copyData', t: '梁跨数据复制' }]} />
            <ItemCol w={90} items={[{ icon: 'sideBar', t: '生成侧面筋' }, { icon: 'stand', t: '生成架立筋' }, { icon: 'arch', t: '设置拱梁', caret: 1 }]} />
            <ItemCol w={99} items={[{ icon: 'haunch', t: '生成梁加腋', caret: 1 }, { icon: 'genHang', t: '生成吊筋' }, { icon: 'checked', t: '显示吊筋', sz: 16 }]} />
            <ItemCol w={80} items={[{ icon: 'classify', t: '梁跨分类' }]} />
          </RBody>
          <RLabel>梁二次编辑<TinyCaret /></RLabel>
        </RGroup>
      </Ribbon>

      <OptBar>
        <Sel>第7层<TinyCaret /></Sel>
        <Sel>梁<TinyCaret /></Sel>
        <Sel>梁<TinyCaret /></Sel>
        <Sel>HL1(1)-A<TinyCaret /></Sel>
        <Sel>分层1<TinyCaret /></Sel>
        <OptCheck />
        <OptText $w={50}>点加长度</OptText>
        <OptText $w={27} $dim>长度:</OptText>
        <OptInput>0</OptInput>
        <OptText $w={52} $dim>反向长度:</OptText>
        <OptInput>0</OptInput>
        <OptText $w={7} />
        <OptText $w={63}>左偏心距离:</OptText>
        <OptInput $w={79}>300</OptInput>
        <OptText $w={7} />
        <Sel $w={58} $mr={1}>不偏移<TinyCaret /></Sel>
        <OptText $w={17} $dim>X=</OptText>
        <OptInput $w={62} $dim>0<Spin>▲<br />▼</Spin></OptInput>
        <OptText $w={38} $dim>mmY=</OptText>
        <OptInput $w={62} $dim>0<Spin>▲<br />▼</Spin></OptInput>
        <OptText $w={24} $dim>&nbsp;mm</OptText>
      </OptBar>

      <Body>
        <Panel $w={210}>
          <CloseBar>✕</CloseBar>
          <PanelTitle>导航树</PanelTitle>
          <NavTools>
            <Glyph name="star" size={14} />
            <NavToolBtn $push><Glyph name="listBtn" /></NavToolBtn>
            <NavToolBtn><Glyph name="panelBtn" /></NavToolBtn>
          </NavTools>
          <NavTree>
            <ScrollThumb $x={198} $y={12} $h={708} />
            {navItems.map((n, i) => (n.i ? (
              <NavLeaf key={i} $active={n.active}><Glyph name={n.i} />{n.t}</NavLeaf>
            ) : (
              <NavHead key={i}><Folder open={n.open} />{n.t}</NavHead>
            )))}
          </NavTree>
        </Panel>
        <Gap />
        <MiddleCol>
          <MidBox>
            <CloseBar>✕</CloseBar>
            <TabStrip>
              <PanelTab $active>构件列表</PanelTab>
              <PanelTab>图纸管理</PanelTab>
            </TabStrip>
            <MidTools>
              <MidTool $w={62}><Glyph name="docNew" />新建<TinyCaret $gap={3} /></MidTool>
              <MidTool $w={52}><Glyph name="docCopy" />复制</MidTool>
              <MidTool $w={52}><Glyph name="docDel" />删除</MidTool>
              <MidTool $w={75}><Glyph name="layers" />层间复制</MidTool>
              <MidTool $w={52}><Glyph name="archive" />存档</MidTool>
              <MidTool $w={52}><Glyph name="fetch" />提取</MidTool>
              <MoreMark>▸▸</MoreMark>
            </MidTools>
            <SearchRow>搜索构件...<Glyph name="search" size={12} /></SearchRow>
            <ListTree>
              <ScrollThumb $x={389} $y={16} $h={93} />
              <ListRow $x={10}><TreeTri />梁</ListRow>
              <ListRow $x={30}><TreeTri />非框架梁</ListRow>
              <ListRow $x={60}><ListLabel $active>HL1(1)-A</ListLabel></ListRow>
              {listItems.map(t => <ListRow key={t} $x={60}><ListLabel>{t}</ListLabel></ListRow>)}
            </ListTree>
          </MidBox>
          <MidBox $grow>
            <SecondBar>✕</SecondBar>
            <TabStrip>
              <PanelTab>属性列表</PanelTab>
              <PanelTab $active>图层管理</PanelTab>
            </TabStrip>
            <LayerTools><span>显示指定图层</span><span>隐藏指定图层</span></LayerTools>
            <LayerGrid>
              <LayerHead>开 / 关</LayerHead><LayerHead>颜色</LayerHead><LayerHead>名称</LayerHead><LayerHead $fill />
              <LayerCell><Box /></LayerCell><LayerCell><PlayTri /></LayerCell><LayerCell $text>已提取的 CAD 图层</LayerCell><span />
              <LayerCell><Box /></LayerCell><LayerCell><PlayTri /></LayerCell><LayerCell $text>CAD 原始图层</LayerCell><span />
            </LayerGrid>
          </MidBox>
        </MiddleCol>
        <Gap><GripHandle>◂</GripHandle></Gap>
        <Canvas>
          <ViewBar>
            <ViewBtn $h={29}>
              <Svg width="26" height="24" viewBox="0 0 26 24"><circle cx="11" cy="13" r="9" fill="#d8dce2" stroke="#555" /><circle cx="19" cy="8" r="5" fill="#eef0f3" stroke="#555" /><path d="M2 15c5 3 14 0 21-8" fill="none" stroke="#555" /></Svg>
            </ViewBtn>
            <ViewBtn $h={30}>
              <Svg width="24" height="24" viewBox="0 0 24 24"><path d="M1 7l5-5h17v17l-5 4H1z" fill="#7e8fa8" stroke="#3a4250" /><path d="M1 7h17v16M18 7l5-5" fill="none" stroke="#3a4250" /><text x="6" y="20" fontSize="8" fill="#222" fontFamily="Liberation Sans">3D</text></Svg>
            </ViewBtn>
            <ViewBtn>
              <Svg width="24" height="24" viewBox="0 0 24 24"><path d="M1 6l5-5h17v17l-5 4H1z" fill="#dfe8f5" stroke="#3a4250" /><path d="M1 6h17v16M18 6l5-5M6 1v16h17M6 17l-5 5" fill="none" stroke="#3a4250" /></Svg>
            </ViewBtn>
            <ViewCaret><TinyCaret $color="#444" /></ViewCaret>
            <ViewBtn>
              <Svg width="24" height="24" viewBox="0 0 24 24"><path d="M1 6l5-5h17v17l-5 4H1z" fill="#7e8fa8" stroke="#3a4250" /><path d="M1 6h17v16M18 6l5-5" fill="none" stroke="#3a4250" /></Svg>
            </ViewBtn>
            <ViewCaret><TinyCaret $color="#444" /></ViewCaret>
            <ViewBtn>
              <Svg width="26" height="24" viewBox="0 0 26 24"><path d="M21 7a10 10 0 10.5 9" fill="none" stroke="#3a4250" strokeWidth="1.500" /><path d="M17 8h7V1z" fill="#3a4250" /></Svg>
            </ViewBtn>
            <ViewCaret $h={8}><TinyCaret $color="#444" /></ViewCaret>
            <ViewSep />
            <Svg width="24" height="22" viewBox="0 0 24 22"><path d="M1 1h22v20H1z" fill="#7e8fa8" stroke="#3a4250" /><path d="M1 5h22M12 5v16M4 9h2M8 9h2M15 9h2M19 9h2M4 13h2M8 13h2M15 13h2M19 13h2M4 17h2M8 17h2M15 17h2M19 17h2" stroke="#23282f" /></Svg>
          </ViewBar>
          <AxisMark width="100" height="60" viewBox="0 0 100 60">
            <text x="5" y="13" fontSize="12" fill="#00b000" fontFamily="Liberation Sans">Y</text>
            <path d="M9.500 45V25" stroke="#00ff00" strokeWidth="5" />
            <path d="M4.500 27l5-10 5 10z" fill="#00e000" />
            <path d="M12 45h17" stroke="#ff0000" strokeWidth="5" />
            <path d="M29 39l11 6-11 6z" fill="#ff0000" />
            <ellipse cx="9.500" cy="45" rx="5" ry="6" fill="#0000c0" />
            <text x="41" y="51" fontSize="13" fill="#e00000" fontFamily="Liberation Sans">X</text>
          </AxisMark>
        </Canvas>
        <Gap><GripHandle>▸</GripHandle></Gap>
        <Panel $w={278} $left $noRight>
          <CloseBar>✕</CloseBar>
          <PanelTitle>显示设置</PanelTitle>
          <RightTabs>
            <RightTab $active>图元显示</RightTab>
            <RightTab>楼层显示</RightTab>
          </RightTabs>
          <GridWrap>
            <ScrollThumb $x={261} $y={14} $h={201} />
            <GridRow>
              <GridHead>图层构件</GridHead><GridHead>显示图元</GridHead><GridHead>显示名称</GridHead>
            </GridRow>
            {layerRows.map((r, i) => (
              <GridRow key={i}>
                <TreeCell $level={r.l}>
                  {r.l === 2 && <Branch $last={r.last} />}
                  {r.l < 2 && <Minus $level={r.l} />}
                  {r.t}
                </TreeCell>
                <CheckCell><CheckMark state={r.a} /></CheckCell>
                <CheckCell><CheckMark state={r.b} /></CheckCell>
              </GridRow>
            ))}
          </GridWrap>
          <RightFoot><ResetBtn>恢复默认设置</ResetBtn></RightFoot>
        </Panel>
      </Body>

      <Status>
        <StatusText $w={264}>&nbsp;X = 60322 Y = 116704</StatusText>
        <StatusText $w={83}>层高： 4.3</StatusText>
        <StatusText $w={133}>标高： 34.7~39</StatusText>
        <StatusText $w={103}>0</StatusText>
        <StatusText $w={103}>隐藏：0</StatusText>
        <StatusBtn $w={25} $mr={3}><Glyph name="ortho" /></StatusBtn>
        <StatusBtn $w={36} $mr={6} $on><Glyph name="snap" /><TinyCaret /></StatusBtn>
        <StatusBtn $w={25} $mr={6}><Glyph name="cross" /></StatusBtn>
        <StatusBtn $w={36} $mr={3}><Glyph name="angle" /><TinyCaret /></StatusBtn>
        <StatusBtn $w={36} $mr={3}><Glyph name="dynamic" /><TinyCaret /></StatusBtn>
        <StatusBtn $w={73} $mr={3}>跨图层选择</StatusBtn>
        <StatusBtn $w={61} $mr={0}>折线选择</StatusBtn>
        <StatusHint>指定第一点</StatusHint>
        <Fps>1000 FPS</Fps>
      </Status>

      <RedArrow width="1916" height="1039" viewBox="0 0 1916 1039">
        <polygon points="1458,279 1564,131 1559,127.500 1582,112 1574,138 1569,135" fill="#f0301f" />
      </RedArrow>
    </Page>
  );
}
